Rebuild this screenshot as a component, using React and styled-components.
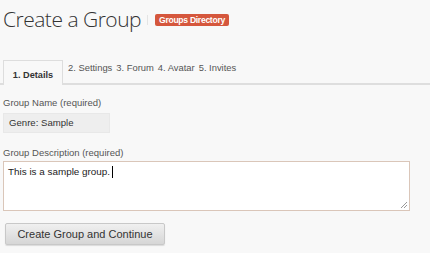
import React from 'react';
import styled, { createGlobalStyle } from 'styled-components';

const GlobalStyle = createGlobalStyle`
  html, body {
    margin: 0;
    padding: 0;
    background: #f8f8f8;
  }
  body {
    font-family: "Liberation Sans", Arial, sans-serif;
    color: #555;
  }
`;

const Page = styled.div`
  width: 430px;
  height: 253px;
  overflow: hidden;
  padding: 0 3px;
  box-sizing: border-box;
`;

const Header = styled.div`
  display: flex;
  align-items: center;
  height: 38px;
`;

const Title = styled.h1`
  margin: 0;
  font-family: "Open Sans", sans-serif;
  font-weight: 300;
  font-size: 21px;
  line-height: 38px;
  letter-spacing: -0.5px;
  color: #333;
`;

const Divider = styled.span`
  width: 1px;
  height: 10px;
  background: #e4e4e4;
  margin: 2px 7px 0 6px;
`;

const Badge = styled.span`
  background: #d5573d;
  color: #fff;
  font-weight: bold;
  font-size: 8.6px;
  line-height: 12px;
  letter-spacing: -0.3px;
  padding: 0 4px;
  border-radius: 2px;
  margin-top: 1px;
`;

const Tabs = styled.div`
  display: flex;
  align-items: flex-start;
  margin: 22px -3px 0;
  padding-left: 3px;
  border-bottom: 2px solid #dedede;
  height: 23px;
`;

const Tab = styled.div`
  font-size: 9.4px;
  line-height: 12px;
  color: #555;
  padding: 2px 2px 0;
  ${({ active }) => active && `
    height: 23px;
    box-sizing: border-box;
    margin-right: 3px;
    padding: 8px 0 0;
    width: 60px;
    text-align: center;
    background: #f8f8f8;
    border: 1px solid #ddd;
    border-bottom: none;
    font-weight: bold;
    font-size: 9.2px;
    color: #333;
    position: relative;
    z-index: 1;
    &::after {
      content: "";
      position: absolute;
      left: 0;
      right: 0;
      bottom: -2px;
      height: 2px;
      background: #f8f8f8;
    }
  `}
`;

const Label = styled.label`
  display: block;
  font-size: 9.5px;
  line-height: 12px;
  color: #555;
  margin-top: ${({ top }) => top}px;
`;

const NameInput = styled.div`
  width: 107px;
  height: 20px;
  box-sizing: border-box;
  background: #eee;
  border: 1px solid #e8e8e8;
  font-size: 9.6px;
  line-height: 18px;
  color: #333;
  padding: 0 5px;
  margin-top: 4px;
`;

const TextArea = styled.div`
  position: relative;
  width: 407px;
  height: 50px;
  box-sizing: border-box;
  background: #fff;
  border: 1px solid #dac6b9;
  font-size: 9.9px;
  line-height: 12px;
  color: #222;
  padding: 4px 4px;
  margin-top: 2px;
`;

const Caret = styled.span`
  display: inline-block;
  width: 1px;
  height: 12px;
  background: #000;
  vertical-align: -3px;
  margin-left: 2px;
`;

const Grip = styled.svg`
  position: absolute;
  right: 1px;
  bottom: 1px;
`;

const Button = styled.button`
  display: block;
  margin: 12px 0 0 2px;
  width: 160px;
  height: 22px;
  font-family: "Liberation Sans", Arial, sans-serif;
  font-size: 11px;
  color: #333;
  background: linear-gradient(#f0f0f0, #d6d6d6);
  border: 1px solid #c8c8c8;
  border-radius: 2px;
  box-shadow: 0 1px 1px rgba(0, 0, 0, 0.12);
  padding: 0;
`;

const App = () => {
  const steps = ['1. Details', '2. Settings', '3. Forum', '4. Avatar', '5. Invites'];

  return (
    <Page>
      <GlobalStyle />
      <Header>
        <Title>Create a Group</Title>
        <Divider />
        <Badge>Groups Directory</Badge>
      </Header>
      <Tabs>
        {steps.map((s, i) => (
          <Tab key={s} active={i === 0}>{s}</Tab>
        ))}
      </Tabs>
      <Label top={12}>Group Name (required)</Label>
      <NameInput>Genre: Sample</NameInput>
      <Label top={14}>Group Description (required)</Label>
      <TextArea>
        This is a sample group.<Caret />
        <Grip width="8" height="8" viewBox="0 0 8 8">
          <path d="M7 1 L1 7 M7 4 L4 7" stroke="#999" strokeWidth="1" />
        </Grip>
      </TextArea>
      <Button>Create Group and Continue</Button>
    </Page>
  );
};

export default App;
